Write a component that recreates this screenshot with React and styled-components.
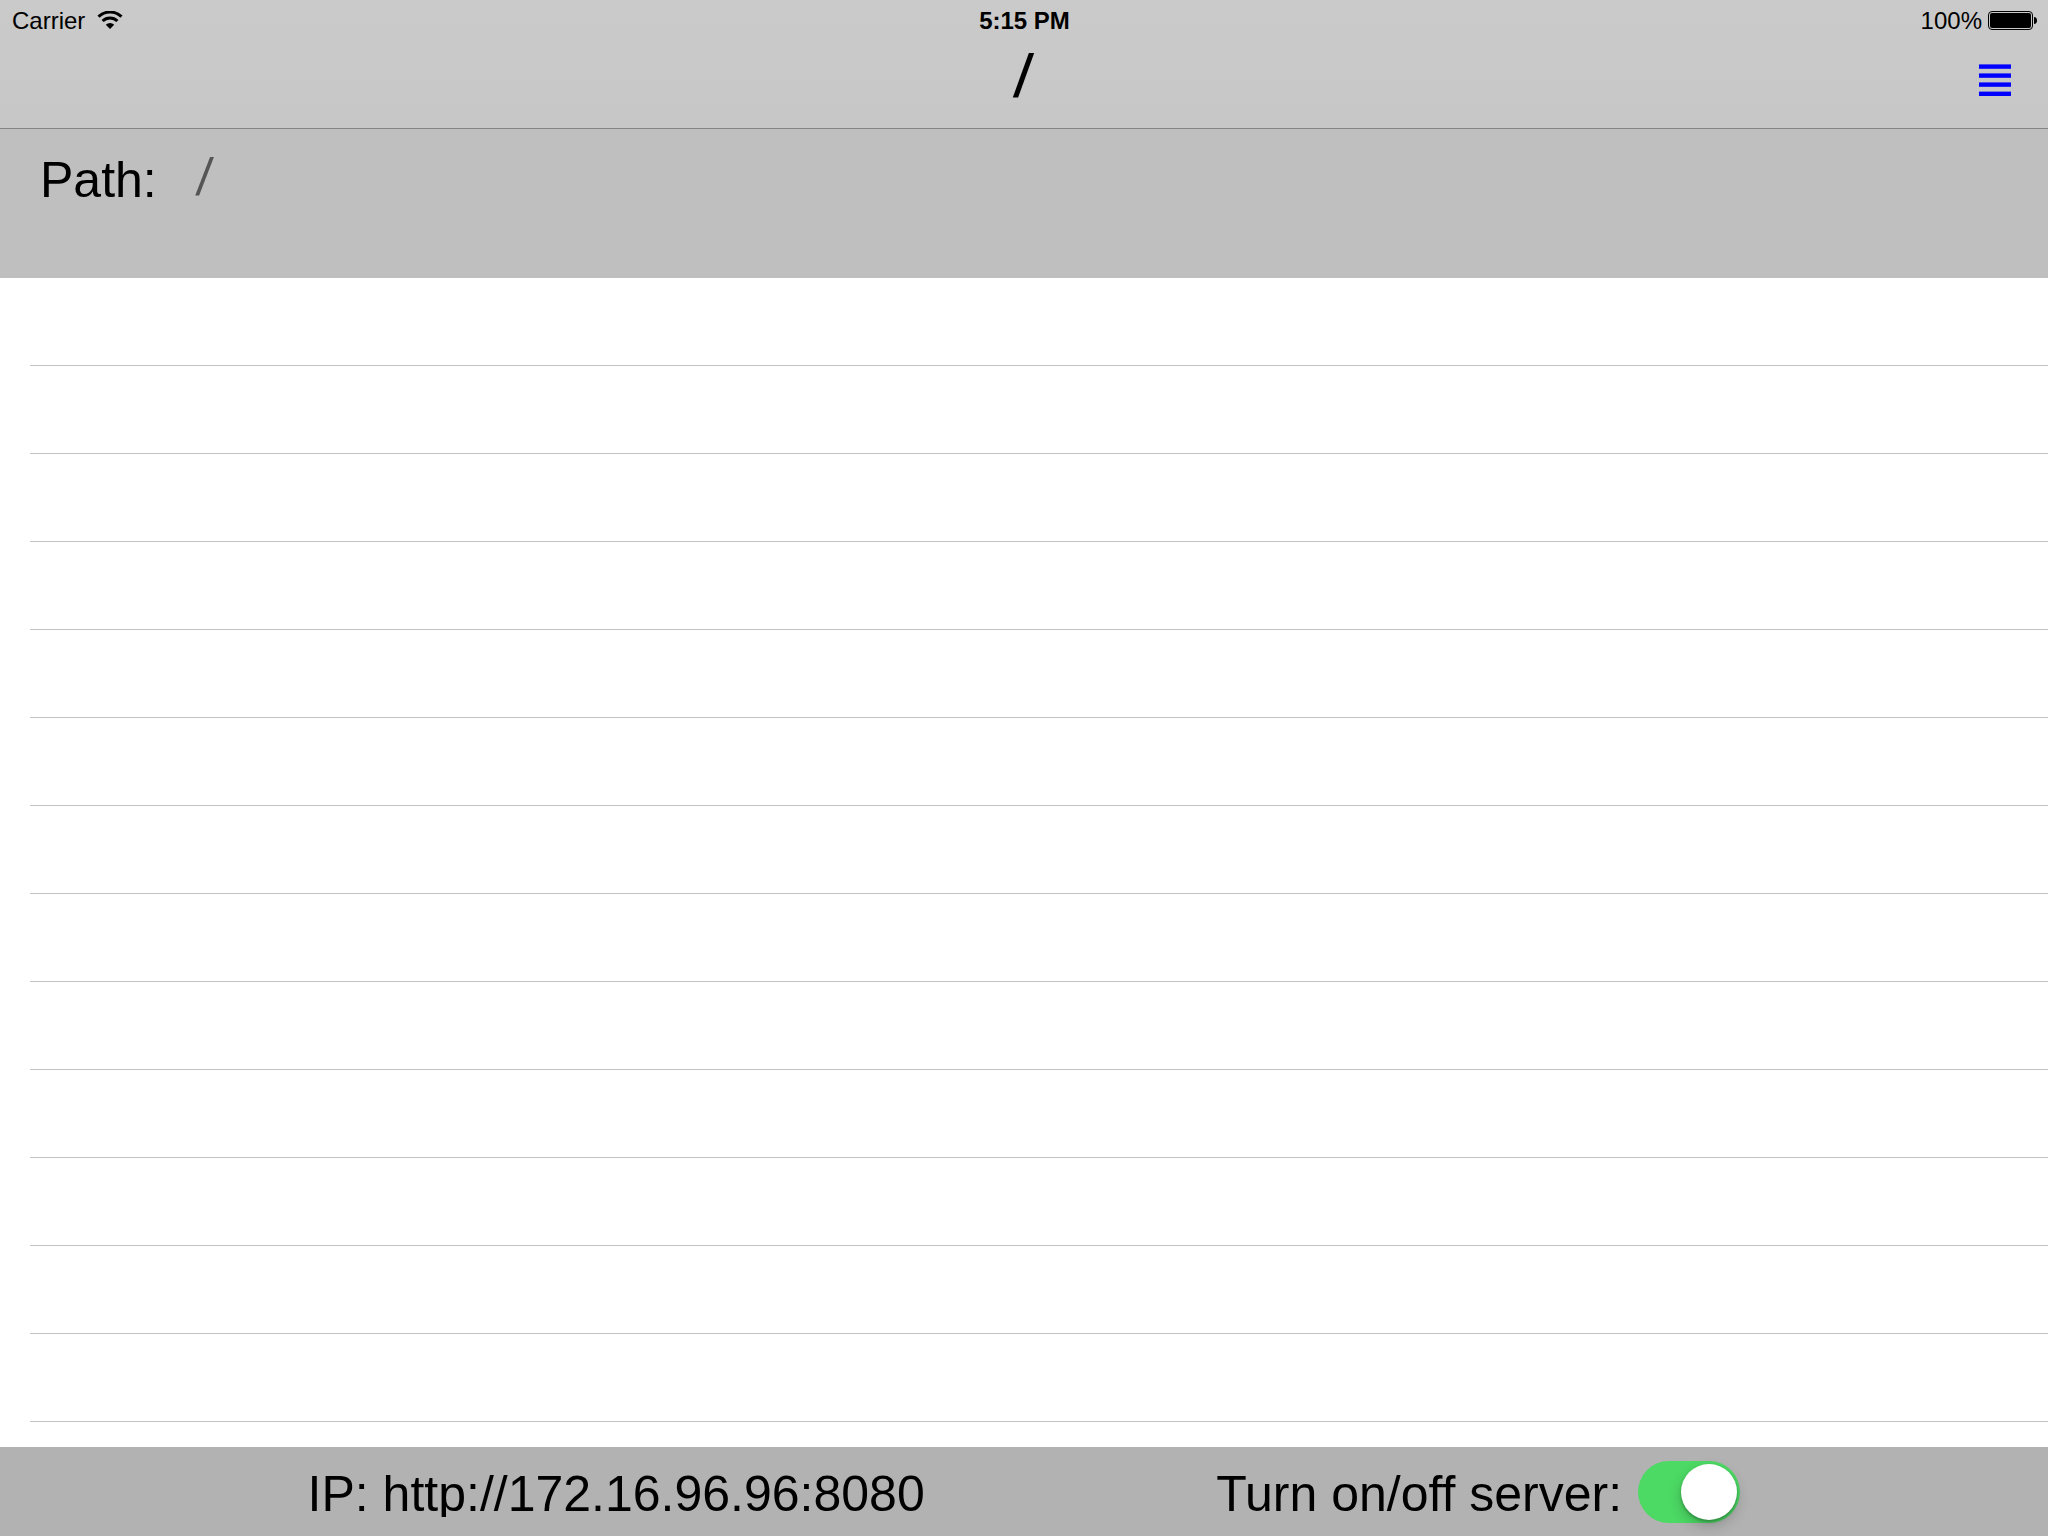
import React, { useState } from "react";
import styled, { createGlobalStyle } from "styled-components";

const GlobalStyle = createGlobalStyle`
  *, *::before, *::after { box-sizing: border-box; }
  body {
    margin: 0;
    background: #fff;
    color: #000;
    font-family: "Liberation Sans", Arial, sans-serif;
  }
`;

const Screen = styled.div`
  display: flex;
  flex-direction: column;
  height: 100vh;
  overflow: hidden;
`;

const Header = styled.header`
  flex: none;
  background: linear-gradient(#cacaca, #c7c7c7);
  border-bottom: 1px solid #858585;
`;

const StatusBar = styled.div`
  display: grid;
  grid-template-columns: 1fr auto 1fr;
  align-items: center;
  height: 42px;
  padding: 0 11px 0 12px;
  font-size: 24px;
  line-height: 42px;
`;

const StatusGroup = styled.div`
  display: flex;
  align-items: center;
  justify-content: ${({ $end }) => ($end ? "flex-end" : "flex-start")};
  gap: ${({ $end }) => ($end ? "6px" : "12px")};
`;

const Clock = styled.time`
  font-weight: 700;
`;

const NavBar = styled.div`
  display: grid;
  grid-template-columns: 1fr auto 1fr;
  height: 86px;
  padding: 0 32px;
`;

const Title = styled.h1`
  grid-column: 2;
  margin: 0;
  font-family: Roboto, "Liberation Sans", sans-serif;
  font-size: 58px;
  font-weight: 500;
  line-height: 64px;
`;

const MenuButton = styled.button`
  justify-self: end;
  display: flex;
  align-items: center;
  height: 76px;
  padding: 0 5px;
  border: 0;
  background: none;
  cursor: pointer;
`;

const PathBar = styled.section`
  flex: none;
  display: flex;
  gap: 38px;
  height: 149px;
  padding: 20px 40px;
  background: #bfbfbf;
  font-size: 50px;
  line-height: 62px;
`;

const PathValue = styled.span`
  color: #555;
  font-family: Roboto, "Liberation Sans", sans-serif;
  line-height: 54px;
`;

const FileList = styled.ul`
  flex: 1;
  min-height: 0;
  margin: 0;
  padding: 0 0 0 30px;
  overflow: hidden;
  list-style: none;
`;

const FileRow = styled.li`
  height: 88px;
  border-bottom: 1px solid #c3c3c6;
`;

const Footer = styled.footer`
  flex: none;
  display: grid;
  grid-template-columns: 59fr 41fr;
  align-items: start;
  height: 89px;
  background: #b2b2b2;
  font-size: 50px;
`;

const Address = styled.p`
  height: 70px;
  margin: 0;
  padding-left: 24px;
  overflow: hidden;
  text-align: center;
  line-height: 94px;
`;

const ServerControl = styled.label`
  display: flex;
  gap: 16px;
  padding-left: 8px;
  line-height: 94px;
`;

const Switch = styled.input`
  appearance: none;
  flex: none;
  width: 102px;
  height: 62px;
  margin: 14px 0 0;
  padding: 3px;
  border-radius: 31px;
  background: ${({ checked }) => (checked ? "#4cd964" : "#e5e5e5")};
  cursor: pointer;

  &::before {
    content: "";
    display: block;
    width: 56px;
    height: 56px;
    margin-left: ${({ checked }) => (checked ? "auto" : "0")};
    border-radius: 50%;
    background: #fff;
    box-shadow: 0 6px 14px rgba(0, 0, 0, 0.2), 0 2px 3px rgba(0, 0, 0, 0.25);
  }
`;

const WifiIcon = () => (
  <svg width="26" height="20" viewBox="0 0 26 20" aria-hidden="true">
    <path d="M1.5 5.700a16.500 16.500 0 0 1 23 0" fill="none" stroke="#000" strokeWidth="3" />
    <path d="M5.600 10a10.600 10.600 0 0 1 14.800 0" fill="none" stroke="#000" strokeWidth="3" />
    <path d="M13 18 8.800 13.800a6 6 0 0 1 8.400 0z" />
  </svg>
);

const BatteryIcon = () => (
  <svg width="49" height="20" viewBox="0 0 49 20" aria-hidden="true">
    <rect x="0.5" y="0.5" width="44" height="18" rx="3.5" fill="none" stroke="#000" />
    <rect x="2" y="2" width="41" height="15" rx="2" />
    <path d="M46 6c2 0 3 1.500 3 3.500s-1 3.500-3 3.500z" />
  </svg>
);

const ListIcon = () => (
  <svg width="32" height="32" viewBox="0 0 32 32" fill="#00f" aria-hidden="true">
    <rect y="0.400" width="32" height="4.400" />
    <rect y="9.400" width="32" height="4.400" />
    <rect y="18.400" width="32" height="4.400" />
    <rect y="27.600" width="32" height="4.400" />
  </svg>
);

const rows = Array.from({ length: 13 }, (_, i) => i);

export default function App() {
  const [running, setRunning] = useState(true);
  return (
    <Screen>
      <GlobalStyle />
      <Header>
        <StatusBar>
          <StatusGroup>
            <span>Carrier</span>
            <WifiIcon />
          </StatusGroup>
          <Clock>5:15 PM</Clock>
          <StatusGroup $end>
            <span>100%</span>
            <BatteryIcon />
          </StatusGroup>
        </StatusBar>
        <NavBar>
          <Title>/</Title>
          <MenuButton type="button" aria-label="Menu">
            <ListIcon />
          </MenuButton>
        </NavBar>
      </Header>
      <PathBar>
        <span>Path:</span>
        <PathValue>/</PathValue>
      </PathBar>
      <FileList>
        {rows.map((row) => (
          <FileRow key={row} />
        ))}
      </FileList>
      <Footer>
        <Address>IP: http://172.16.96.96:8080</Address>
        <ServerControl>
          Turn on/off server:
          <Switch
            type="checkbox"
            role="switch"
            checked={running}
            onChange={(event) => setRunning(event.target.checked)}
          />
        </ServerControl>
      </Footer>
    </Screen>
  );
}
